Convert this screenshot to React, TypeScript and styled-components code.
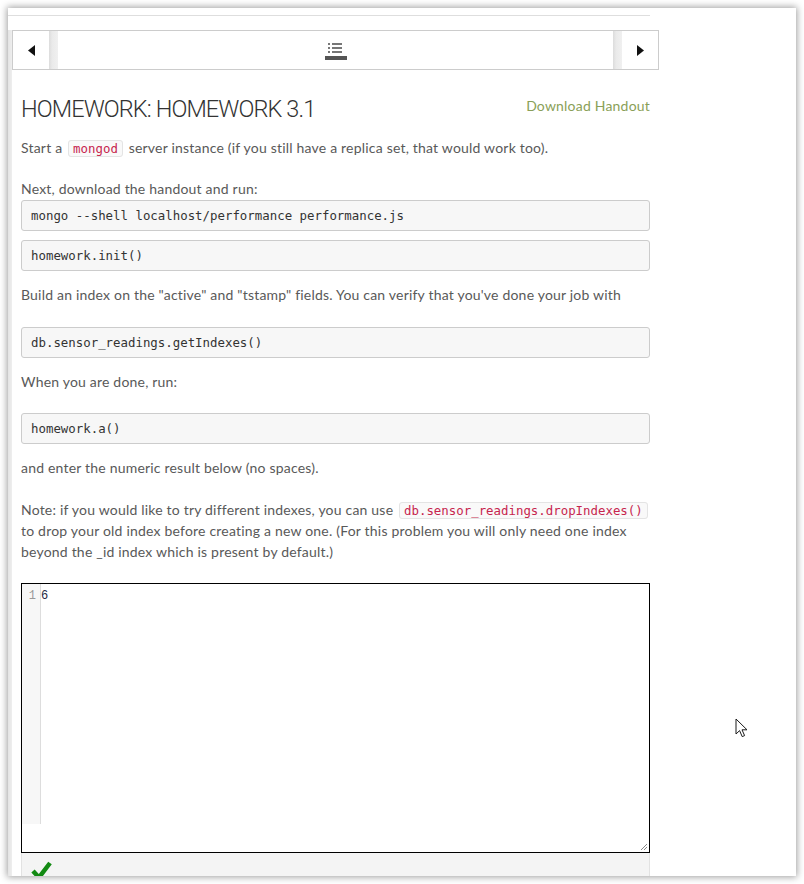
import React from "react";
import styled, { createGlobalStyle } from "styled-components";

const GlobalStyle = createGlobalStyle`
  html, body { margin: 0; padding: 0; background: #ffffff; }
  body { font-family: Lato, "Open Sans", sans-serif; }
  * { box-sizing: border-box; }
`;

const Page = styled.div`
  width: 804px;
  height: 884px;
  padding: 8px 0 0 8px;
  overflow: hidden;
`;

const Frame = styled.div`
  position: relative;
  width: 788px;
  height: 868px;
  background: #ffffff;
  box-shadow: 0 0 7px 1px rgba(0, 0, 0, 0.38);
  overflow: hidden;
  display: flex;
  flex-direction: column;
`;

const TopRule = styled.div`
  width: 642px;
  height: 1px;
  margin-top: 7px;
  background: #dedede;
  flex-shrink: 0;
`;

const Body = styled.div`
  margin-top: 14px;
  display: flex;
  flex: 1;
  min-height: 0;
`;

const LeftStrip = styled.div`
  width: 4px;
  flex-shrink: 0;
  background: linear-gradient(to right, #e4e4e4, #eeeeee);
`;

const Column = styled.div`
  display: flex;
  flex-direction: column;
  flex: 1;
`;

const Nav = styled.div`
  width: 647px;
  height: 40px;
  border: 1px solid #cccccc;
  display: flex;
  flex-shrink: 0;
`;

const NavButton = styled.div`
  width: 36px;
  display: flex;
  align-items: center;
  justify-content: center;
  background: #ffffff;
`;

const NavStrip = styled.div`
  width: 9px;
  background: linear-gradient(to right, #dcdcdc, #eaeaea 35%, #f0f0f0);
`;

const NavMiddle = styled.div`
  flex: 1;
  display: flex;
  justify-content: center;
  align-items: flex-start;
  padding-top: 11px;
`;

const Content = styled.div`
  width: 638px;
  padding-left: 9px;
  display: flex;
  flex-direction: column;
`;

const HeaderRow = styled.div`
  margin-top: 25px;
  display: flex;
  justify-content: space-between;
  align-items: flex-start;
`;

const Title = styled.h1`
  margin: 0;
  font-family: Roboto, Lato, sans-serif;
  font-weight: 300;
  font-size: 23.5px;
  line-height: 29px;
  letter-spacing: -0.9px;
  color: #333333;
`;

const HandoutLink = styled.a`
  margin-top: 1px;
  font-size: 14px;
  line-height: 20px;
  letter-spacing: 0.2px;
  color: #8a9f58;
  text-decoration: none;
`;

const Para = styled.p<{ $mt: number }>`
  margin: ${(p) => p.$mt}px 0 0 0;
  font-size: 14px;
  line-height: 21px;
  letter-spacing: 0.2px;
  color: #595959;
`;

const CodeBlock = styled.pre<{ $mt: number }>`
  margin: ${(p) => p.$mt}px 0 0 0;
  height: 31px;
  padding: 0 9px;
  border: 1px solid #cccccc;
  border-radius: 3px;
  background: #f7f7f7;
  display: flex;
  align-items: center;
  font-family: "DejaVu Sans Mono", "Liberation Mono", monospace;
  font-size: 12.4px;
  color: #333333;
`;

const InlineCode = styled.code`
  margin: 0 2px;
  padding: 0 4px;
  border: 1px solid #e4e4e4;
  border-radius: 3px;
  background: #f9f9f9;
  font-family: "DejaVu Sans Mono", "Liberation Mono", monospace;
  font-size: 12.4px;
  line-height: 14px;
  letter-spacing: 0;
  color: #c7254e;
`;

const Editor = styled.div`
  position: relative;
  margin-top: 21px;
  height: 270px;
  border: 1px solid #000000;
  display: flex;
  align-items: flex-start;
  background: #ffffff;
`;

const Gutter = styled.div`
  width: 19px;
  height: 240px;
  flex-shrink: 0;
  padding: 5px 4px 0 0;
  border-right: 1px solid #dddddd;
  background: #f7f7f7;
  text-align: right;
  font-family: "Liberation Mono", monospace;
  font-size: 12px;
  line-height: 14px;
  color: #999999;
`;

const EditorLine = styled.div`
  padding-top: 5px;
  font-family: "Liberation Mono", monospace;
  font-size: 12px;
  line-height: 14px;
  color: #1e2a44;
`;

const Grip = styled.svg`
  position: absolute;
  right: 1px;
  bottom: 1px;
`;

const Footer = styled.div`
  height: 30px;
  padding: 8px 0 0 9px;
  border-left: 1px solid #e2e2e2;
  border-right: 1px solid #e2e2e2;
  background: #f4f4f4;
`;

const Cursor = styled.svg`
  position: absolute;
  left: 727px;
  top: 710px;
`;

const ListIcon = () => (
  <svg width="22" height="18" viewBox="0 0 22 18">
    <rect x="3" y="1" width="2" height="2" fill="#777" />
    <rect x="3" y="5" width="2" height="2" fill="#777" />
    <rect x="3" y="9" width="2" height="2" fill="#777" />
    <rect x="7" y="1" width="10" height="2" fill="#777" />
    <rect x="7" y="5" width="10" height="2" fill="#777" />
    <rect x="7" y="9" width="10" height="2" fill="#777" />
    <rect x="0" y="14" width="22" height="4" fill="#555" />
  </svg>
);

const Arrow = ({ dir }: { dir: "left" | "right" }) => (
  <svg width="9" height="11" viewBox="0 0 9 11">
    <polygon points={dir === "left" ? "8,0 8,11 1,5.5" : "1,0 1,11 8,5.5"} fill="#111" />
  </svg>
);

export default function App() {
  return (
    <>
      <GlobalStyle />
      <Page>
        <Frame>
          <TopRule />
          <Body>
            <LeftStrip />
            <Column>
              <Nav>
                <NavButton>
                  <Arrow dir="left" />
                </NavButton>
                <NavStrip />
                <NavMiddle>
                  <ListIcon />
                </NavMiddle>
                <NavStrip />
                <NavButton>
                  <Arrow dir="right" />
                </NavButton>
              </Nav>
              <Content>
                <HeaderRow>
                  <Title>HOMEWORK: HOMEWORK 3.1</Title>
                  <HandoutLink href="#">Download Handout</HandoutLink>
                </HeaderRow>
                <Para $mt={13}>
                  Start a <InlineCode>mongod</InlineCode> server instance (if you still have a replica set, that would work too).
                </Para>
                <Para $mt={20}>Next, download the handout and run:</Para>
                <CodeBlock $mt={1}>mongo --shell localhost/performance performance.js</CodeBlock>
                <CodeBlock $mt={9}>homework.init()</CodeBlock>
                <Para $mt={13}>
                  Build an index on the "active" and "tstamp" fields. You can verify that you've done your job with
                </Para>
                <CodeBlock $mt={22}>db.sensor_readings.getIndexes()</CodeBlock>
                <Para $mt={13}>When you are done, run:</Para>
                <CodeBlock $mt={21}>homework.a()</CodeBlock>
                <Para $mt={13}>and enter the numeric result below (no spaces).</Para>
                <Para $mt={21}>
                  Note: if you would like to try different indexes, you can use{" "}
                  <InlineCode>db.sensor_readings.dropIndexes()</InlineCode>
                  <br />
                  to drop your old index before creating a new one. (For this problem you will only need one index
                  <br />
                  beyond the _id index which is present by default.)
                </Para>
                <Editor>
                  <Gutter>1</Gutter>
                  <EditorLine>6</EditorLine>
                  <Grip width="8" height="8" viewBox="0 0 8 8">
                    <line x1="7" y1="1" x2="1" y2="7" stroke="#888" strokeWidth="1" />
                    <line x1="7" y1="4" x2="4" y2="7" stroke="#888" strokeWidth="1" />
                  </Grip>
                </Editor>
                <Footer>
                  <svg width="21" height="19" viewBox="0 0 21 19">
                    <path d="M2 10 L8 16.5 L19 2" fill="none" stroke="#138a13" strokeWidth="4.5" strokeLinejoin="miter" />
                  </svg>
                </Footer>
              </Content>
            </Column>
          </Body>
          <Cursor width="14" height="21" viewBox="0 0 14 21">
            <path
              d="M1 1 L1 16 L4.6 12.6 L7.2 18.6 L9.6 17.6 L7 11.8 L12 11.8 Z"
              fill="#ffffff"
              stroke="#1a1a1a"
              strokeWidth="1"
              strokeLinejoin="round"
            />
          </Cursor>
        </Frame>
      </Page>
    </>
  );
}
